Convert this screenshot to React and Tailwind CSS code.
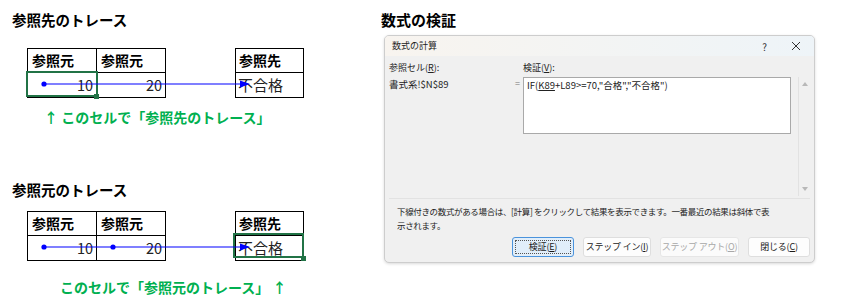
import React from 'react';

const jp = { fontFamily: '"Noto Sans CJK JP", "Noto Sans", sans-serif' };

const TraceArrow = ({ dots }) => (
  <svg className="absolute left-0 top-0 pointer-events-none" width="300" height="60">
    <line x1={dots[0]} y1="36" x2="216" y2="36" stroke="#0000ff" strokeWidth="1.2" />
    {dots.map((x) => (
      <circle key={x} cx={x} cy="36" r="2.6" fill="#0000ff" />
    ))}
    <polygon points="223,36 213,32.5 213,39.5" fill="#0000ff" />
  </svg>
);

const TraceTable = ({ selectTarget, dots }) => (
  <div className="relative ml-[15px] flex">
    {/* 参照元 x2 */}
    <div className="grid grid-cols-[69px_69px] border-l border-t border-black">
      <div className="h-[24px] border-r border-b border-black pl-[4px] text-[14px] font-bold leading-[23px]">参照元</div>
      <div className="h-[24px] border-r border-b border-black pl-[4px] text-[14px] font-bold leading-[23px]">参照元</div>
      <div className="h-[25px] border-r border-b border-black pr-[3px] text-right text-[14.5px] leading-[24px] text-[#222]">10</div>
      <div className="h-[25px] border-r border-b border-black pr-[3px] text-right text-[14.5px] leading-[24px] text-[#222]">20</div>
    </div>
    {/* 参照先 */}
    <div className="ml-[69px] grid grid-cols-[68px] border-l border-t border-black">
      <div className="h-[24px] border-r border-b border-black pl-[3px] text-[14px] font-bold leading-[23px]">参照先</div>
      <div className="h-[25px] border-r border-b border-black pl-[2px] text-[15px] leading-[24px] text-[#222]">不合格</div>
    </div>

    {selectTarget ? (
      <>
        <div className="absolute left-[206px] top-[22px] h-[25px] w-[71px] border-2 border-[#217346]" />
        <div className="absolute left-[274px] top-[45px] h-[5px] w-[5px] bg-[#217346]" />
      </>
    ) : (
      <>
        <div className="absolute left-[-1px] top-[23px] h-[26px] w-[72px] border-2 border-[#217346]" />
        <div className="absolute left-[67px] top-[46px] h-[5px] w-[5px] bg-[#217346]" />
      </>
    )}
    <TraceArrow dots={dots} />
  </div>
);

const Btn = ({ children, focused, disabled, w }) => (
  <div
    className={`relative flex h-[20px] items-center justify-center whitespace-nowrap rounded-[3px] border text-[9px] tracking-[-0.2px] ${w} ${
      focused
        ? 'border-[#4a93dc] bg-[#e1eefa] text-[#1a1a1a]'
        : disabled
        ? 'border-[#e6e6e6] bg-[#fbfbfb] text-[#a8a8a8]'
        : 'border-[#dedede] bg-[#fdfdfd] text-[#1a1a1a]'
    }`}
  >
    {focused && <div className="absolute inset-[2px] border border-dotted border-[#555]" />}
    <span className="relative">{children}</span>
  </div>
);

export default function App() {
  return (
    <div className="flex h-[305px] w-[845px] bg-white text-black" style={jp}>
      {/* 左：トレース */}
      <div className="flex w-[381px] flex-col pl-[12px] pt-[10px]">
        <h2 className="text-[14.5px] font-bold leading-[20px]">参照先のトレース</h2>
        <div className="mt-[18px]">
          <TraceTable selectTarget={false} dots={[17]} />
        </div>
        <p className="ml-[32px] mt-[9px] text-[14px] font-bold leading-[20px] text-[#00b050]">↑ このセルで「参照先のトレース」</p>

        <h2 className="mt-[53px] text-[14.5px] font-bold leading-[20px]">参照元のトレース</h2>
        <div className="mt-[11px]">
          <TraceTable selectTarget dots={[17, 86]} />
        </div>
        <p className="ml-[48px] mt-[16px] text-[14px] font-bold leading-[20px] text-[#00b050]">このセルで「参照元のトレース」 ↑</p>
      </div>

      {/* 右：数式の検証 */}
      <div className="flex flex-col pt-[10px]">
        <h2 className="text-[15px] font-bold leading-[20px]">数式の検証</h2>
        <div className="ml-[3px] mt-[5px] flex h-[228px] w-[431px] flex-col overflow-hidden rounded-[5px] border border-[#cdcdcd] bg-[#f0f0f0] shadow-[0_1px_3px_rgba(0,0,0,0.15)]">
          {/* タイトルバー */}
          <div className="flex h-[20px] items-center justify-between bg-gradient-to-r from-[#f8f4ef] to-[#eef4f8] pl-[7px] pr-[13px] text-[9px] text-[#222]">
            <span>数式の計算</span>
            <div className="flex items-center gap-[24px] text-[#333]">
              <span className="text-[10px]">?</span>
              <svg width="10" height="10" viewBox="0 0 10 10">
                <path d="M1 1L9 9M9 1L1 9" stroke="#333" strokeWidth="1" />
              </svg>
            </div>
          </div>

          {/* 本体 */}
          <div className="flex pl-[4px] pr-[3px] pt-[4px]">
            <div className="flex w-[402px] flex-col text-[9px] text-[#222]">
              <div className="flex h-[16px] items-center">
                <span className="w-[134px]">
                  参照セル(<span className="underline">R</span>):
                </span>
                <span>
                  検証(<span className="underline">V</span>):
                </span>
              </div>
              <div className="mt-[1px] flex">
                <div className="w-[126px] pt-[1px] text-[9.5px] leading-[12px]">書式系!$N$89</div>
                <div className="w-[8px] pt-[1px] leading-[12px] text-[#777]">=</div>
                <div className="h-[57px] w-[268px] border border-[#a9a9a9] bg-white px-[3px] pt-[1px] text-[9.5px] leading-[12px]">
                  IF(<span className="underline">K89</span>+L89&gt;=70,"合格","不合格")
                </div>
              </div>
            </div>
            <div className="ml-[7px] mt-[17px] flex h-[119px] w-[13px] flex-col items-center justify-between border-l border-[#e2e2e2] py-[5px]">
              <svg width="6" height="4" viewBox="0 0 6 4">
                <path d="M3 0L6 4H0Z" fill="#b8b8b8" />
              </svg>
              <svg width="6" height="4" viewBox="0 0 6 4">
                <path d="M0 0H6L3 4Z" fill="#b8b8b8" />
              </svg>
            </div>
          </div>

          <div className="mx-[4px] mt-[2px] h-px bg-[#e2e2e2]" />

          <p className="mt-[5px] pl-[12px] text-[8.5px] leading-[14px] tracking-[-0.35px] text-[#222]">
            下線付きの数式がある場合は、[計算] をクリックして結果を表示できます。一番最近の結果は斜体で表
            <br />
            示されます。
          </p>

          <div className="mt-[5px] flex justify-end gap-[9px] pr-[4px]">
            <Btn focused w="w-[62px]">
              検証(<span className="underline">E</span>)
            </Btn>
            <Btn w="w-[68px]">
              ステップ イン(<span className="underline">I</span>)
            </Btn>
            <Btn disabled w="w-[79px]">
              ステップ アウト(<span className="underline">O</span>)
            </Btn>
            <Btn w="w-[62px]">
              閉じる(<span className="underline">C</span>)
            </Btn>
          </div>
        </div>
      </div>
    </div>
  );
}
